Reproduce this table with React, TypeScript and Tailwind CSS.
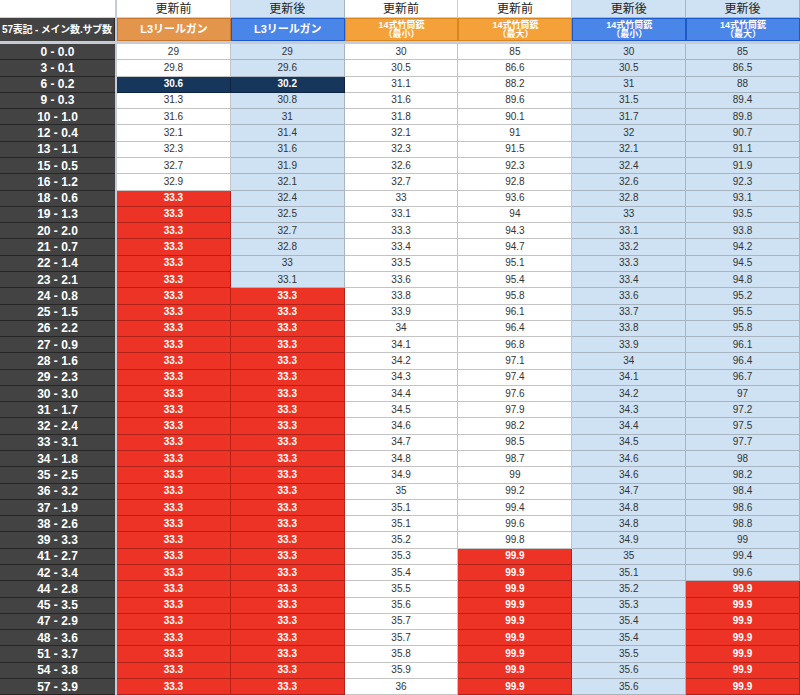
import React from 'react'

const rows: [string, string[]][] = [
  ['0 - 0.0', ['29', '29', '30', '85', '30', '85']],
  ['3 - 0.1', ['29.8', '29.6', '30.5', '86.6', '30.5', '86.5']],
  ['6 - 0.2', ['30.6', '30.2', '31.1', '88.2', '31', '88']],
  ['9 - 0.3', ['31.3', '30.8', '31.6', '89.6', '31.5', '89.4']],
  ['10 - 1.0', ['31.6', '31', '31.8', '90.1', '31.7', '89.8']],
  ['12 - 0.4', ['32.1', '31.4', '32.1', '91', '32', '90.7']],
  ['13 - 1.1', ['32.3', '31.6', '32.3', '91.5', '32.1', '91.1']],
  ['15 - 0.5', ['32.7', '31.9', '32.6', '92.3', '32.4', '91.9']],
  ['16 - 1.2', ['32.9', '32.1', '32.7', '92.8', '32.6', '92.3']],
  ['18 - 0.6', ['33.3', '32.4', '33', '93.6', '32.8', '93.1']],
  ['19 - 1.3', ['33.3', '32.5', '33.1', '94', '33', '93.5']],
  ['20 - 2.0', ['33.3', '32.7', '33.3', '94.3', '33.1', '93.8']],
  ['21 - 0.7', ['33.3', '32.8', '33.4', '94.7', '33.2', '94.2']],
  ['22 - 1.4', ['33.3', '33', '33.5', '95.1', '33.3', '94.5']],
  ['23 - 2.1', ['33.3', '33.1', '33.6', '95.4', '33.4', '94.8']],
  ['24 - 0.8', ['33.3', '33.3', '33.8', '95.8', '33.6', '95.2']],
  ['25 - 1.5', ['33.3', '33.3', '33.9', '96.1', '33.7', '95.5']],
  ['26 - 2.2', ['33.3', '33.3', '34', '96.4', '33.8', '95.8']],
  ['27 - 0.9', ['33.3', '33.3', '34.1', '96.8', '33.9', '96.1']],
  ['28 - 1.6', ['33.3', '33.3', '34.2', '97.1', '34', '96.4']],
  ['29 - 2.3', ['33.3', '33.3', '34.3', '97.4', '34.1', '96.7']],
  ['30 - 3.0', ['33.3', '33.3', '34.4', '97.6', '34.2', '97']],
  ['31 - 1.7', ['33.3', '33.3', '34.5', '97.9', '34.3', '97.2']],
  ['32 - 2.4', ['33.3', '33.3', '34.6', '98.2', '34.4', '97.5']],
  ['33 - 3.1', ['33.3', '33.3', '34.7', '98.5', '34.5', '97.7']],
  ['34 - 1.8', ['33.3', '33.3', '34.8', '98.7', '34.6', '98']],
  ['35 - 2.5', ['33.3', '33.3', '34.9', '99', '34.6', '98.2']],
  ['36 - 3.2', ['33.3', '33.3', '35', '99.2', '34.7', '98.4']],
  ['37 - 1.9', ['33.3', '33.3', '35.1', '99.4', '34.8', '98.6']],
  ['38 - 2.6', ['33.3', '33.3', '35.1', '99.6', '34.8', '98.8']],
  ['39 - 3.3', ['33.3', '33.3', '35.2', '99.8', '34.9', '99']],
  ['41 - 2.7', ['33.3', '33.3', '35.3', '99.9', '35', '99.4']],
  ['42 - 3.4', ['33.3', '33.3', '35.4', '99.9', '35.1', '99.6']],
  ['44 - 2.8', ['33.3', '33.3', '35.5', '99.9', '35.2', '99.9']],
  ['45 - 3.5', ['33.3', '33.3', '35.6', '99.9', '35.3', '99.9']],
  ['47 - 2.9', ['33.3', '33.3', '35.7', '99.9', '35.4', '99.9']],
  ['48 - 3.6', ['33.3', '33.3', '35.7', '99.9', '35.4', '99.9']],
  ['51 - 3.7', ['33.3', '33.3', '35.8', '99.9', '35.5', '99.9']],
  ['54 - 3.8', ['33.3', '33.3', '35.9', '99.9', '35.6', '99.9']],
  ['57 - 3.9', ['33.3', '33.3', '36', '99.9', '35.6', '99.9']],
]

// which columns are "更新後" (light blue)
const after = [false, true, false, false, true, true]

const cellClass = (row: number, col: number, v: string) => {
  if (row === 2 && col < 2) return 'bg-[#17365c] text-white font-bold border-[#0d2440]'
  const red = (col < 2 && v === '33.3') || ((col === 3 || col === 5) && v === '99.9')
  if (red) return 'bg-[#ec3326] text-white font-bold border-[#b32218]'
  if (after[col]) return 'bg-[#cfe2f3] text-[#333] border-[#a8b4c0]'
  return 'bg-white text-[#333] border-[#c4c4c4]'
}

const Label = ({ title, sub }: { title: string; sub?: string }) => (
  <div className="flex flex-col items-center leading-[9px]">
    <span>{title}</span>
    {sub && <span>{sub}</span>}
  </div>
)

export default function App() {
  const heads = [
    { top: '更新前', bg: 'bg-[#e3954c] border-[#c7772d]', label: <span className="text-[11px]">L3リールガン</span> },
    { top: '更新後', bg: 'bg-[#4a86e8] border-[#1c5acc]', label: <span className="text-[11px]">L3リールガン</span> },
    { top: '更新前', bg: 'bg-[#f4a13a] border-[#d9861f]', label: <Label title="14式竹筒銃" sub="（最小）" /> },
    { top: '更新前', bg: 'bg-[#f4a13a] border-[#d9861f]', label: <Label title="14式竹筒銃" sub="（最大）" /> },
    { top: '更新後', bg: 'bg-[#4a86e8] border-[#1c5acc]', label: <Label title="14式竹筒銃" sub="（最小）" /> },
    { top: '更新後', bg: 'bg-[#4a86e8] border-[#1c5acc]', label: <Label title="14式竹筒銃" sub="（最大）" /> },
  ]

  return (
    <div className="w-[800px] h-[695px] flex flex-col bg-white overflow-hidden leading-none font-['Liberation_Sans','Noto_Sans_CJK_JP',sans-serif]">
      {/* header rows */}
      <div className="flex h-[18px] shrink-0">
        <div className="w-[115px] bg-white border-b border-[#d0d0d0]" />
        <div className="w-[2px] bg-[#c5ccd6]" />
        {heads.map((h, i) => (
          <div
            key={i}
            className={`flex-1 flex items-center justify-center text-[12px] text-[#222] border-r border-b ${after[i] ? 'bg-[#cfe2f3] border-[#a8b4c0]' : 'bg-white border-[#d0d0d0]'}`}
          >
            {h.top}
          </div>
        ))}
      </div>
      <div className="flex h-[23px] shrink-0">
        <div className="w-[115px] bg-[#434343] text-white font-bold text-[10px] tracking-[-0.2px] whitespace-nowrap flex items-center justify-center border-r border-[#2a2a2a]">
          57表記 - メイン数.サブ数
        </div>
        <div className="w-[2px] bg-[#c5ccd6]" />
        {heads.map((h, i) => (
          <div key={i} className={`flex-1 flex items-center justify-center text-white font-bold text-[9px] border ${h.bg}`}>
            {h.label}
          </div>
        ))}
      </div>
      <div className="h-[3px] shrink-0 bg-[#c5ccd6]" />

      {/* data rows */}
      <div className="flex-1 min-h-0 flex flex-col">
        {rows.map(([label, vals], r) => (
          <div key={label} className="flex-1 min-h-0 flex">
            <div className="w-[115px] bg-[#434343] text-white font-bold text-[12px] flex items-center justify-center border-b border-[#262626]">
              {label}
            </div>
            <div className="w-[2px] bg-[#c5ccd6]" />
            {vals.map((v, c) => (
              <div
                key={c}
                className={`flex-1 flex items-center justify-center text-[10px] border-r border-b ${cellClass(r, c, v)}`}
              >
                {v}
              </div>
            ))}
          </div>
        ))}
      </div>
    </div>
  )
}
